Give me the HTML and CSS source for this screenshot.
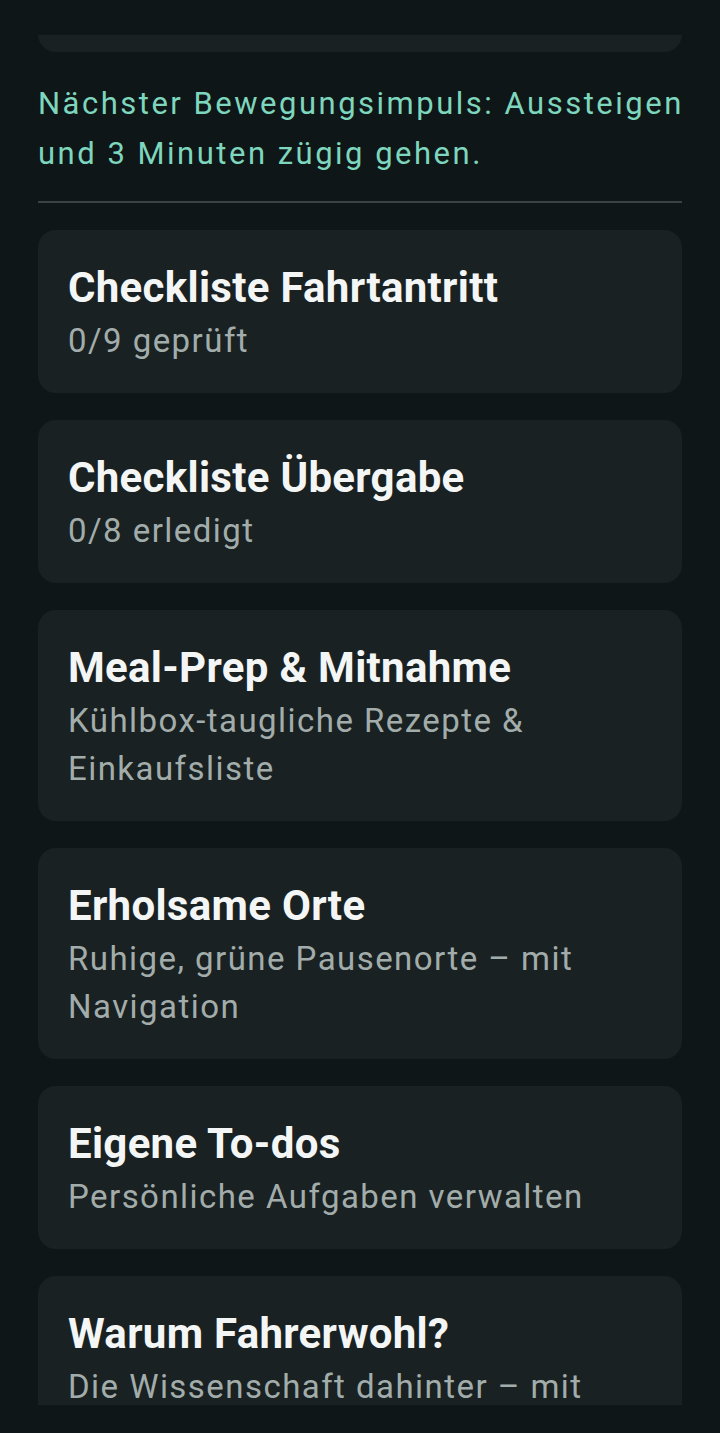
FILE: index.html
```html
<!DOCTYPE html>
<html>
<head>
    <title>Fahrerwohl</title>
    <link rel="stylesheet" href="styles.css">
</head>
<body>
    <div class="app">
        <div class="viewport">
            <div class="content">
                <div class="card card-hidden">
                    <h2 class="card-title">Pausenplan</h2>
                    <p class="card-sub">Nächste Pause in 45 Minuten</p>
                </div>

                <p class="impulse">Nächster Bewegungsimpuls: Aussteigen und 3 Minuten zügig gehen.</p>
                <hr class="divider">

                <div class="card">
                    <h2 class="card-title">Checkliste Fahrtantritt</h2>
                    <p class="card-sub">0/9 geprüft</p>
                </div>
                <div class="card">
                    <h2 class="card-title">Checkliste Übergabe</h2>
                    <p class="card-sub">0/8 erledigt</p>
                </div>
                <div class="card">
                    <h2 class="card-title">Meal-Prep &amp; Mitnahme</h2>
                    <p class="card-sub">Kühlbox-taugliche Rezepte &amp; Einkaufsliste</p>
                </div>
                <div class="card">
                    <h2 class="card-title">Erholsame Orte</h2>
                    <p class="card-sub">Ruhige, grüne Pausenorte – mit Navigation</p>
                </div>
                <div class="card">
                    <h2 class="card-title">Eigene To-dos</h2>
                    <p class="card-sub">Persönliche Aufgaben verwalten</p>
                </div>
                <div class="card">
                    <h2 class="card-title">Warum Fahrerwohl?</h2>
                    <p class="card-sub">Die Wissenschaft dahinter – mit Quellen und Studien</p>
                </div>
            </div>
        </div>
    </div>
</body>
</html>
```

FILE: styles.css
```css
body {
    margin: 0;
    background-color: #0f1617;
    font-family: Roboto, "Noto Sans", sans-serif;
}
.app {
    height: 1433px;
    padding-top: 35px;
    box-sizing: border-box;
}
.viewport {
    height: 1370px;
    overflow: hidden;
}
.content {
    padding: 0 38px;
    display: flex;
    flex-direction: column;
    gap: 27px;
}
.card {
    background-color: #1a2122;
    border-radius: 18px;
    padding: 33px 30px 28px;
}
.card-hidden {
    margin-top: -146px;
}
.card-title {
    margin: 0;
    font-size: 42px;
    line-height: 50px;
    font-weight: 700;
    color: #f3f6f5;
    letter-spacing: 0.3px;
}
.card-sub {
    margin: 4px 0 0;
    font-size: 33px;
    line-height: 48px;
    color: #a2adab;
    letter-spacing: 1.45px;
}
.impulse {
    margin: 0 -12px 0 0;
    font-size: 31px;
    line-height: 50px;
    color: #7dd6bd;
    letter-spacing: 2.5px;
}
.divider {
    margin: -5px 0 0;
    border: none;
    border-top: 2px solid #3a4243;
}
```
